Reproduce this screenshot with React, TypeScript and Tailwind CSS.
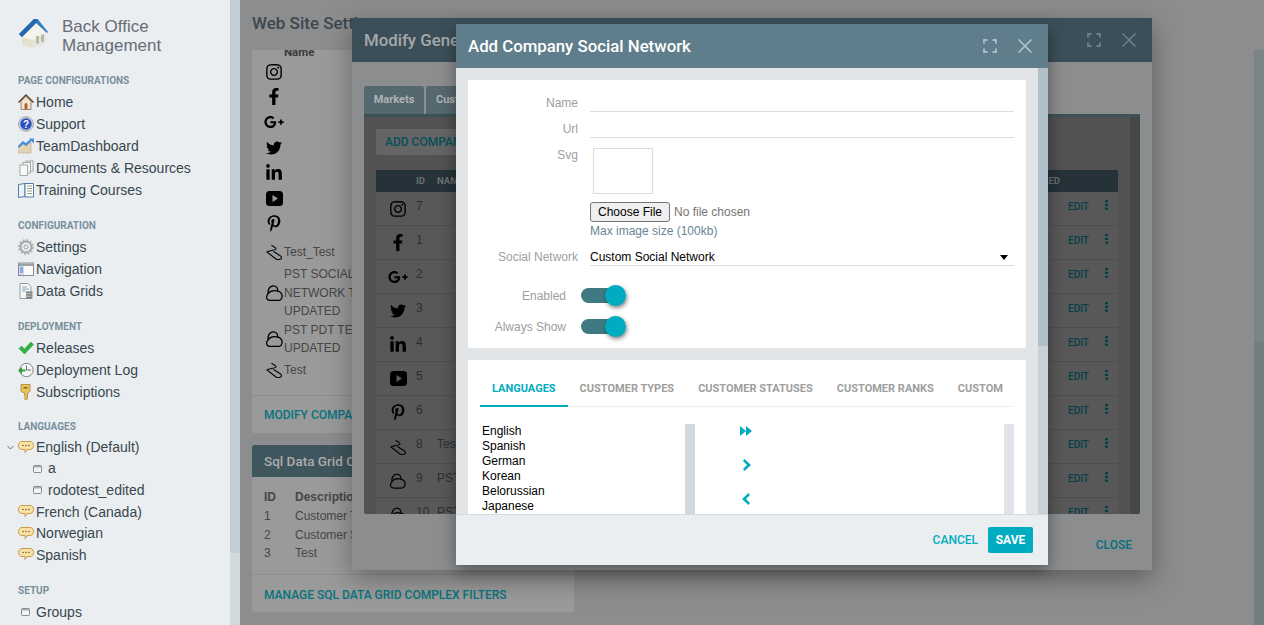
import React from 'react';
import { FaInstagram, FaFacebookF, FaGooglePlusG, FaTwitter, FaLinkedinIn, FaPinterestP } from 'react-icons/fa';

const HomeIcon = () => (
  <svg width="16" height="16" viewBox="0 0 16 16">
    <path d="M3 7 8 2.500 13 7v8.500H3z" fill="#f2e3cf" stroke="#8a7060" strokeWidth=".8" />
    <path d="M.5 8.500 8 1l7.500 7.500" fill="none" stroke="#5f4030" strokeWidth="1.400" />
    <rect x="6.500" y="9" width="3" height="6.500" rx="1.500" fill="#b5652a" />
  </svg>
);
const HelpIcon = () => (
  <svg width="16" height="16" viewBox="0 0 16 16">
    <circle cx="8" cy="8" r="7.500" fill="#c5cbd3" stroke="#8b939c" strokeWidth=".6" />
    <circle cx="8" cy="8" r="5.700" fill="#2a4fc0" />
    <text x="8" y="11.500" textAnchor="middle" fontSize="10" fontWeight="700" fill="#fff" fontFamily="Liberation Sans">?</text>
  </svg>
);
const ChartIcon = () => (
  <svg width="16" height="16" viewBox="0 0 16 16">
    <path d="M0 9 5 6l3 2 5-4v11H0z" fill="#e2d3b4" stroke="#a8997c" strokeWidth=".5" />
    <path d="M.5 9 5 4.500l3 2L13 2" fill="none" stroke="#3f8fdc" strokeWidth="2.200" />
    <path d="M11 .5h5v5z" fill="#3f8fdc" />
  </svg>
);
const DocsIcon = () => (
  <svg width="16" height="16" viewBox="0 0 16 16">
    <rect x="8" y="1" width="7" height="10" fill="#f4f6f4" stroke="#8d9a96" strokeWidth=".8" />
    <rect x="5" y="2.500" width="7.500" height="10.500" fill="#f4f6f4" stroke="#8d9a96" strokeWidth=".8" />
    <rect x="2" y="5" width="7.500" height="10.500" fill="#f8faf8" stroke="#8d9a96" strokeWidth=".8" />
  </svg>
);
const BookIcon = () => (
  <svg width="16" height="16" viewBox="0 0 16 16">
    <path d="M.5 2.500 7 1.500v13l-6.500 1z" fill="#eef3f8" stroke="#3e6f9e" strokeWidth=".9" />
    <path d="M7 1.500h8.500v13.500H7z" fill="#fff" stroke="#3e6f9e" strokeWidth=".9" />
    <path d="M9 4h5M9 6.500h5M9 9h5M9 11.500h5" stroke="#7d9a7a" strokeWidth=".9" />
  </svg>
);
const GearIcon = () => (
  <svg width="16" height="16" viewBox="0 0 16 16">
    <circle cx="8" cy="8" r="5.500" fill="none" stroke="#a3a5a6" strokeWidth="2" />
    <circle cx="8" cy="8" r="7" fill="none" stroke="#b4b6b7" strokeWidth="2" strokeDasharray="2 1.660" />
    <circle cx="8" cy="8" r="2" fill="#eceff1" stroke="#8c8e90" strokeWidth=".8" />
  </svg>
);
const WindowIcon = () => (
  <svg width="16" height="16" viewBox="0 0 16 16">
    <rect x=".5" y="2" width="15" height="12.500" fill="#fafafa" stroke="#8b8f94" />
    <rect x="1" y="2.500" width="14" height="2.500" fill="#9fa3a8" />
    <rect x="1" y="5" width="5" height="9" fill="#cfdcf0" />
    <path d="M2 7h3M2 9h3M2 11h3" stroke="#4f7cc4" />
  </svg>
);
const GridDocIcon = () => (
  <svg width="16" height="16" viewBox="0 0 16 16">
    <path d="M2 .5h8l3 3v12H2z" fill="#f6f8f6" stroke="#7e8a86" strokeWidth=".8" />
    <path d="M4 4h5M4 6h7M4 8h4" stroke="#6d9bb0" strokeWidth=".8" />
    <rect x="8" y="8.500" width="6.500" height="2" fill="#7c7f80" />
    <rect x="8" y="11" width="6.500" height="2" fill="#8f9293" />
    <rect x="8" y="13.500" width="6.500" height="2" fill="#7c7f80" />
  </svg>
);
const CheckIcon = () => (
  <svg width="16" height="16" viewBox="0 0 16 16">
    <path d="M1 8.500 3.500 6l3 3L13 2l2.500 2.500L6.500 14z" fill="#2fb344" stroke="#1f8a33" strokeWidth=".5" />
  </svg>
);
const LogIcon = () => (
  <svg width="16" height="16" viewBox="0 0 16 16">
    <circle cx="8.500" cy="8" r="6.700" fill="#f4f5f4" stroke="#7f8784" strokeWidth="1" />
    <path d="M8.500 3.500V8H13" fill="none" stroke="#5b625f" strokeWidth=".9" />
    <path d="M0 8.500 4 5v2.500h3.500v2H4V12z" fill="#2aa33c" />
  </svg>
);
const KeyIcon = () => (
  <svg width="16" height="16" viewBox="0 0 16 16">
    <path d="M3 .5h9v7L9.500 9v6l-2 1-1-2 1-1-1-1.500V9L3 7.500z" fill="#e8c45a" stroke="#a88730" strokeWidth=".8" />
    <rect x="5.500" y="3" width="4" height="1.500" fill="#8a6d20" />
  </svg>
);
const ChatIcon = () => (
  <svg width="16" height="16" viewBox="0 0 16 16">
    <path d="M4 1.500h8c2 0 3.500 1.500 3.500 4S14 9.500 12 9.500H9.500L7 12.500l.2-3H4C2 9.500.5 8 .5 5.500S2 1.500 4 1.500z" fill="#f7e3a8" stroke="#c89a4a" strokeWidth="1" />
    <path d="M5 5.500h.01M8 5.500h.01M11 5.500h.01" stroke="#7b5a20" strokeWidth="1.600" strokeLinecap="round" />
  </svg>
);
const SmallWindowIcon = () => (
  <svg width="9" height="8" viewBox="0 0 9 8">
    <rect x=".5" y=".5" width="8" height="7" rx=".8" fill="#f2f4f5" stroke="#858b90" />
    <rect x="1" y="1" width="7" height="1.500" fill="#a9aeb3" />
  </svg>
);
const LogoIcon = () => (
  <svg width="30" height="30" viewBox="0 0 30 30">
    <path d="M3 19 17 5l10 10v10l-13 5-11-3z" fill="#f4f4ec" />
    <path d="M3 19v8l11 3v-8z" fill="#e4e0cc" />
    <path d="M14 22v8l13-5V15z" fill="#e6e6dc" />
    <rect x="17" y="18" width="3" height="7.500" fill="#b9b9ac" />
    <rect x="22" y="16.500" width="3" height="7.500" fill="#b9b9ac" />
    <path d="M0 16 15 1l4 .5L29 14l-1 1L17 5 3 19z" fill="#2f7fc8" />
    <path d="M0 16 15 1l4 .5L17 5 3 19z" fill="#2568ad" />
  </svg>
);
const HookIcon = () => (
  <svg width="16" height="16" viewBox="0 0 16 16" fill="none" stroke="#000" strokeWidth="1.100">
    <path d="M5.500 1C7 3 10.500 3.500 10 5 9 6.500 3 6.500 1 8l9 7c2 1.300 5.500.5 5.500-1.500 0-1-1.500-2-2.500-2.500L7.500 7.500" />
  </svg>
);
const CloudIcon = () => (
  <svg width="17" height="16" viewBox="0 0 17 16" fill="none" stroke="#000" strokeWidth="1.300">
    <path d="M4.500 15.500C1.500 15.500 0 13.500.8 11c.4-1.200 1.200-1.800 1.400-2.500C1.500 5 3.500 1 7 .8c3-.2 5 2.200 4.500 5.200 3 .5 5 3 4.500 6-.4 2.500-2 3.500-4 3.500z" />
    <path d="M2.200 8.500C4 6 8 5 11.500 6" />
  </svg>
);
const YoutubeIcon = () => (
  <svg width="17" height="15" viewBox="0 0 17 15" className="shrink-0">
    <path fillRule="evenodd" d="M3.500 0h10A3.500 3.500 0 0 1 17 3.500v8a3.500 3.500 0 0 1-3.500 3.500h-10A3.500 3.500 0 0 1 0 11.500v-8A3.500 3.500 0 0 1 3.500 0zM6.500 4v7l5.500-3.500z" fill="#000" />
  </svg>
);
const ExpandIcon = ({ color }: { color: string }) => (
  <svg width="14" height="14" viewBox="0 0 14 14" fill="none" stroke={color} strokeWidth="1.900">
    <path d="M1 4.500V1h3.500M9.500 1H13v3.500M13 9.500V13H9.500M4.500 13H1V9.500" />
  </svg>
);
const CloseIcon = ({ color }: { color: string }) => (
  <svg width="14" height="14" viewBox="0 0 14 14" fill="none" stroke={color} strokeWidth="1.500">
    <path d="M.5.500l13 13M13.500.500l-13 13" />
  </svg>
);

const SectionLabel = ({ children }: { children: React.ReactNode }) => (
  <div className="h-[22px] leading-[24px] pl-[18px] font-[Roboto,sans-serif] text-[10px] font-bold text-[#78909c]">
    {children}
  </div>
);

const NavItem = ({ icon, children, h = 'h-[22px]' }: { icon: React.ReactNode; children: React.ReactNode; h?: string }) => (
  <div className={`${h} flex items-center pl-[18px] text-[14px] text-[#37474f]`}>
    <span className="w-[18px] shrink-0 flex items-center">{icon}</span>
    <span>{children}</span>
  </div>
);

const Sidebar = () => (
  <aside className="w-[230px] h-full shrink-0 bg-[#ebeef1] overflow-hidden">
    <div className="flex items-start pl-[19px] pt-[18px] h-[69px]">
      <LogoIcon />
      <div className="ml-[13px] -mt-[1px] text-[17px] leading-[19px] text-[#666d74]">
        Back Office
        <br />
        Management
      </div>
    </div>
    <SectionLabel>PAGE CONFIGURATIONS</SectionLabel>
    <NavItem icon={<HomeIcon />}>Home</NavItem>
    <NavItem icon={<HelpIcon />}>Support</NavItem>
    <NavItem icon={<ChartIcon />}>TeamDashboard</NavItem>
    <NavItem icon={<DocsIcon />}>Documents &amp; Resources</NavItem>
    <NavItem icon={<BookIcon />}>Training Courses</NavItem>
    <div className="h-[13px]" />
    <SectionLabel>CONFIGURATION</SectionLabel>
    <NavItem icon={<GearIcon />}>Settings</NavItem>
    <NavItem icon={<WindowIcon />}>Navigation</NavItem>
    <NavItem icon={<GridDocIcon />}>Data Grids</NavItem>
    <div className="h-[13px]" />
    <SectionLabel>DEPLOYMENT</SectionLabel>
    <NavItem icon={<CheckIcon />}>Releases</NavItem>
    <NavItem icon={<LogIcon />}>Deployment Log</NavItem>
    <NavItem icon={<KeyIcon />}>Subscriptions</NavItem>
    <div className="h-[12px]" />
    <SectionLabel>LANGUAGES</SectionLabel>
    <div className="relative">
      <svg className="absolute left-[7px] top-[8px]" width="7" height="5" viewBox="0 0 7 5" fill="none" stroke="#5f6b72" strokeWidth="1">
        <path d="M.5 1l3 3 3-3" />
      </svg>
      <NavItem h="h-[21px]" icon={<ChatIcon />}>English (Default)</NavItem>
    </div>
    <div className="h-[21px] flex items-center pl-[33px] text-[14px] text-[#37474f]">
      <span className="w-[15px] flex"><SmallWindowIcon /></span>a
    </div>
    <div className="h-[22px] flex items-center pl-[33px] text-[14px] text-[#37474f]">
      <span className="w-[15px] flex"><SmallWindowIcon /></span>rodotest_edited
    </div>
    <NavItem icon={<ChatIcon />}>French (Canada)</NavItem>
    <NavItem h="h-[21px]" icon={<ChatIcon />}>Norwegian</NavItem>
    <NavItem icon={<ChatIcon />}>Spanish</NavItem>
    <div className="h-[13px]" />
    <SectionLabel>SETUP</SectionLabel>
    <div className="h-[22px] flex items-center pl-[21px] text-[14px] text-[#37474f]">
      <span className="w-[15px] flex"><SmallWindowIcon /></span>Groups
    </div>
  </aside>
);

const brandIcons = [
  <FaInstagram size={18} />,
  <FaFacebookF size={17} />,
  <FaGooglePlusG size={20} className="shrink-0" />,
  <FaTwitter size={18} />,
  <FaLinkedinIn size={18} />,
  <YoutubeIcon />,
  <FaPinterestP size={17} />,
];

const WebSiteSettings = () => (
  <main className="flex-1 min-w-0 h-full bg-[#8c8d8f] pl-[12px] pt-[13px] overflow-hidden">
    <h1 className="h-[37px] font-[Roboto,sans-serif] text-[17px] leading-[20px] font-medium text-[#3c4850]">Web Site Settings</h1>
    <section className="w-[322px] h-[383px] bg-[#9a9a9a] rounded-b-[2px] flex flex-col overflow-hidden">
      <div className="h-[345px] pl-[14px] text-[12px] text-[#464646]">
        <div className="pl-[18px] h-[9px] leading-[4px] text-[11.500px] font-bold text-[#3a3a3a] font-[Roboto,sans-serif]">Name</div>
        <div className="flex flex-col">
          {brandIcons.map((icon, i) => (
            <div key={i} className="h-[25.300px] flex items-center w-[16px] justify-center text-black">
              {icon}
            </div>
          ))}
        </div>
        <div className="mt-[5px] h-[22px] flex items-center"><span className="w-[18px] flex"><HookIcon /></span>Test_Test</div>
        <div className="flex items-center leading-[18.500px] mt-[2px]">
          <span className="w-[18px] flex"><CloudIcon /></span>
          <span className="whitespace-nowrap">PST SOCIAL<br />NETWORK TEST<br />UPDATED</span>
        </div>
        <div className="flex items-center leading-[18.500px]">
          <span className="w-[18px] flex"><CloudIcon /></span>
          <span className="whitespace-nowrap">PST PDT TEST<br />UPDATED</span>
        </div>
        <div className="h-[22px] flex items-center mt-[1px]"><span className="w-[18px] flex"><HookIcon /></span>Test</div>
      </div>
      <div className="flex-1 border-t border-[#8f8f8f] pl-[12px] pt-[1px] flex items-center font-[Roboto,sans-serif] text-[12px] font-medium text-[#06747f] whitespace-nowrap">
        MODIFY COMPANY SOCIAL NETWORKS
      </div>
    </section>
    <section className="mt-[12px] w-[322px] h-[167px] flex flex-col overflow-hidden rounded-[2px] bg-[#9a9a9a]">
      <div className="h-[32px] shrink-0 bg-[#40565f] pl-[12px] flex items-center font-[Roboto,sans-serif] text-[13.500px] font-medium text-[#acacac] whitespace-nowrap">
        Sql Data Grid Complex Filters
      </div>
      <div className="h-[98px] shrink-0 pl-[12px] pt-[11px] text-[12px] text-[#464646] whitespace-nowrap border-b border-[#8f8f8f]">
        <div className="flex h-[18px] items-center font-bold"><span className="w-[31px]">ID</span>Description</div>
        <div className="flex h-[19px] items-center"><span className="w-[31px]">1</span>Customer Type</div>
        <div className="flex h-[19px] items-center"><span className="w-[31px]">2</span>Customer Status</div>
        <div className="flex h-[18px] items-center"><span className="w-[31px]">3</span>Test</div>
      </div>
      <div className="flex-1 pl-[12px] pt-[2px] flex items-center font-[Roboto,sans-serif] text-[12px] font-medium text-[#06747f] whitespace-nowrap">
        MANAGE SQL DATA GRID COMPLEX FILTERS
      </div>
    </section>
  </main>
);

const companyRows: { icon: React.ReactNode; id: number; name?: string }[] = [
  { icon: <FaInstagram size={18} />, id: 7 },
  { icon: <FaFacebookF size={17} />, id: 1 },
  { icon: <FaGooglePlusG size={20} className="shrink-0" />, id: 2 },
  { icon: <FaTwitter size={18} />, id: 3 },
  { icon: <FaLinkedinIn size={18} />, id: 4 },
  { icon: <YoutubeIcon />, id: 5 },
  { icon: <FaPinterestP size={17} />, id: 6 },
  { icon: <HookIcon />, id: 8, name: 'Test_Test' },
  { icon: <CloudIcon />, id: 9, name: 'PST SOCIAL' },
  { icon: <CloudIcon />, id: 10, name: 'PST PDT' },
];

const ModifyGeneralModal = () => (
  <div className="absolute left-[352px] top-[18px] w-[800px] h-[552px] bg-[#8c8d8f] shadow-[0_8px_26px_rgba(0,0,0,0.35)] flex flex-col">
    <div className="h-[44px] shrink-0 bg-[#3c4f58] flex items-center pl-[12px] pr-[16px] font-[Roboto,sans-serif] text-[16.800px] font-medium text-[#a5a9ab]">
      <span className="flex-1 pt-[2px]">Modify General Settings</span>
      <span className="mr-[21px] flex"><ExpandIcon color="#707f86" /></span>
      <CloseIcon color="#707f86" />
    </div>
    <div className="px-[12px] pt-[24px] flex flex-col flex-1 min-h-0">
      <div className="flex gap-[2px] h-[28px] shrink-0 font-[Roboto,sans-serif] text-[11px] font-bold text-[#b0b3b4]">
        <div className="w-[60px] bg-[#56686f] rounded-t-[2px] flex items-center justify-center">Markets</div>
        <div className="w-[60px] bg-[#56686f] rounded-t-[2px] flex items-center pl-[10px]">Customers</div>
      </div>
      <div className="h-[400px] shrink-0 border-t-[3px] border-[#3e5058] bg-[#525252] flex overflow-hidden rounded-b-[2px]">
        <div className="flex-1 min-w-0 pl-[12px] pr-[12px] pt-[12px]">
          <div className="h-[26px] w-[220px] bg-[#656565] rounded-[2px] pl-[9px] flex items-center whitespace-nowrap font-[Roboto,sans-serif] text-[12px] font-medium text-[#05505b]">
            ADD COMPANY SOCIAL NETWORK
          </div>
          <div className="mt-[15px] h-[22px] bg-[#25323a] flex items-center font-[Roboto,sans-serif] text-[9.500px] font-bold text-[#6b7072]">
            <span className="ml-[40px] w-[21px]">ID</span>
            <span className="flex-1">NAME</span>
            <span className="mr-[58px]">ENABLED</span>
          </div>
          <div className="bg-[#585858] text-[12px]">
            {companyRows.map((r) => (
              <div key={r.id} className="h-[34px] flex border-b border-[#4e4e4e] text-black">
                <span className="w-[40px] pl-[14px] flex items-center"><span className="w-[16px] flex justify-center">{r.icon}</span></span>
                <span className="w-[21px] pt-[5px] text-[#2e2e2e]">{r.id}</span>
                <span className="flex-1 pt-[5px] text-[#2e2e2e]">{r.name}</span>
                <span className="pt-[7px] w-[29px] font-[Roboto,sans-serif] text-[10px] font-medium text-[#063f49]">EDIT</span>
                <span className="w-[21px] pt-[8px]">
                  <svg width="3" height="10" viewBox="0 0 3 10" fill="#063f49" className="ml-[8px]">
                    <rect width="3" height="2.200" y="0" /><rect width="3" height="2.200" y="3.800" /><rect width="3" height="2.200" y="7.600" />
                  </svg>
                </span>
              </div>
            ))}
          </div>
        </div>
        <div className="w-[10px] shrink-0 bg-[#444849]" />
      </div>
      <div className="flex-1 flex items-center justify-end pt-[6px] pr-[8px] font-[Roboto,sans-serif] text-[12px] font-medium text-[#06707c]">CLOSE</div>
    </div>
  </div>
);

const FieldRow = ({ label, children, className = '' }: { label: string; children: React.ReactNode; className?: string }) => (
  <div className={`flex ${className}`}>
    <label className="w-[110px] shrink-0 text-right text-[12px] leading-[15px] text-[#9e9e9e]">{label}</label>
    <div className="ml-[12px] w-[424px]">{children}</div>
  </div>
);

const Toggle = () => (
  <div className="relative w-[45px] h-[21px] flex items-center">
    <div className="w-[38px] h-[15px] rounded-full bg-[#3f7a82]" />
    <div className="absolute right-0 top-0 w-[21px] h-[21px] rounded-full bg-[#00acc1] shadow-[1px_2px_4px_rgba(0,0,0,0.5)]" />
  </div>
);

const TabLabel = ({ children, active = false }: { children: React.ReactNode; active?: boolean }) => (
  <div className={`h-[47px] shrink-0 px-[12px] pt-[13px] flex items-center whitespace-nowrap border-b-2 ${active ? 'border-[#00acc1] text-[#00acc1]' : 'border-transparent text-[#9e9e9e]'}`}>
    {children}
  </div>
);

const AddNetworkModal = () => (
  <div className="absolute left-[456px] top-[24px] w-[592px] h-[541px] bg-[#e1e5e8] shadow-[0_6px_16px_rgba(0,0,0,0.4)] flex flex-col">
    <div className="h-[44px] shrink-0 bg-[#607d8b] flex items-center pl-[12px] pr-[16px] font-[Roboto,sans-serif] text-[16.800px] font-medium text-white">
      <span className="flex-1 pt-[2px]">Add Company Social Network</span>
      <span className="mr-[21px] flex"><ExpandIcon color="#a8bdc7" /></span>
      <CloseIcon color="#b4c6ce" />
    </div>
    <div className="flex-1 min-h-0 flex overflow-hidden">
      <div className="flex-1 min-w-0 pl-[12px] pr-[12px] pt-[12px]">
        <div className="h-[268px] bg-white rounded-[2px] pt-[16px]">
          <FieldRow label="Name" className="h-[26px]">
            <div className="h-[16px] border-b border-[#dcdcdc]" />
          </FieldRow>
          <FieldRow label="Url" className="h-[26px]">
            <div className="h-[16px] border-b border-[#dcdcdc]" />
          </FieldRow>
          <FieldRow label="Svg" className="h-[102px]">
            <div className="ml-[3px] w-[60px] h-[46px] border border-[#dcdcdc]" />
            <input
              type="file"
              className="block mt-[8px] h-[20px] text-[12px] text-[#757575] file:text-black file:text-[12px] file:h-[20px] file:w-[80px] file:mr-[4px] file:border file:border-[#767676] file:rounded-[3px] file:bg-[#efefef]"
            />
            <div className="mt-[2px] text-[12px] leading-[15px] text-[#688692]">Max image size (100kb)</div>
          </FieldRow>
          <FieldRow label="Social Network" className="h-[26px]">
            <div className="h-[16px] border-b border-[#dcdcdc] flex items-center justify-between text-[12px] text-black">
              <span className="-mt-[2px]">Custom Social Network</span>
              <span className="mr-[6px] w-0 h-0 border-x-[4px] border-x-transparent border-t-[5px] border-t-black" />
            </div>
          </FieldRow>
          <div className="flex items-center h-[31px] mt-[4px]">
            <label className="w-[98px] text-right text-[12px] text-[#9e9e9e]">Enabled</label>
            <span className="ml-[15px]"><Toggle /></span>
          </div>
          <div className="flex items-center h-[31px]">
            <label className="w-[98px] text-right text-[12px] text-[#9e9e9e]">Always Show</label>
            <span className="ml-[15px]"><Toggle /></span>
          </div>
        </div>
        <div className="mt-[12px] h-[300px] bg-white rounded-[2px] px-[12px]">
          <div className="flex border-b border-[#eeeeee] h-[47px] font-[Roboto,sans-serif] text-[11px] font-bold">
            <TabLabel active>LANGUAGES</TabLabel>
            <TabLabel>CUSTOMER TYPES</TabLabel>
            <TabLabel>CUSTOMER STATUSES</TabLabel>
            <TabLabel>CUSTOMER RANKS</TabLabel>
            <TabLabel>CUSTOM</TabLabel>
          </div>
          <div className="flex mt-[17px]">
            <div className="w-[205px] pl-[2px] text-[12px] leading-[15px] text-black">
              <div>English</div>
              <div>Spanish</div>
              <div>German</div>
              <div>Korean</div>
              <div>Belorussian</div>
              <div>Japanese</div>
            </div>
            <div className="w-[10px] h-[200px] bg-[#d1d8db]" />
            <div className="w-[309px] flex flex-col items-center pr-[208px] pt-[1px] gap-[22px]">
              <svg width="12" height="12" viewBox="0 0 12 12" fill="#00acc1"><path d="M0 1l6 5-6 5zM6 1l6 5-6 5z" /></svg>
              <svg width="8" height="12" viewBox="0 0 8 12" fill="#00acc1" className="ml-[2px]"><path d="M1.500 0l6.500 6-6.500 6L0 10l4-4-4-4z" /></svg>
              <svg width="8" height="12" viewBox="0 0 8 12" fill="#00acc1"><path d="M6.500 0L0 6l6.500 6L8 10 4 6l4-4z" /></svg>
            </div>
            <div className="w-[10px] h-[200px] bg-[#e0e4e8]" />
          </div>
        </div>
      </div>
      <div className="w-[10px] shrink-0 bg-[#c8d1d8] relative">
        <div className="absolute left-0 top-0 w-full h-[278px] bg-[#b0c0c8]" />
      </div>
    </div>
    <div className="h-[51px] shrink-0 bg-[#ebeef1] border-t border-[#d3dadd] flex items-center justify-end gap-[10px] pr-[15px] font-[Roboto,sans-serif] text-[12px] font-medium">
      <span className="text-[#00acc1]">CANCEL</span>
      <button type="button" className="w-[45px] h-[26px] rounded-[2px] bg-[#00acc1] text-white font-bold">SAVE</button>
    </div>
  </div>
);

export default function App() {
  return (
    <div className="relative w-[1264px] h-[625px] overflow-hidden flex font-['Liberation_Sans',Arial,sans-serif]">
      <Sidebar />
      <div className="w-[10px] h-full shrink-0 flex flex-col bg-[#d1d9dd]">
        <div className="h-[553px] bg-[#c3ced4]" />
      </div>
      <WebSiteSettings />
      <div className="w-[10px] h-full shrink-0 flex flex-col bg-[#8c8d8f]">
        <div className="mt-[50px] h-[291px] bg-[#7b8585]" />
        <div className="flex-1 bg-[#747e7f]" />
      </div>
      <ModifyGeneralModal />
      <AddNetworkModal />
    </div>
  );
}
